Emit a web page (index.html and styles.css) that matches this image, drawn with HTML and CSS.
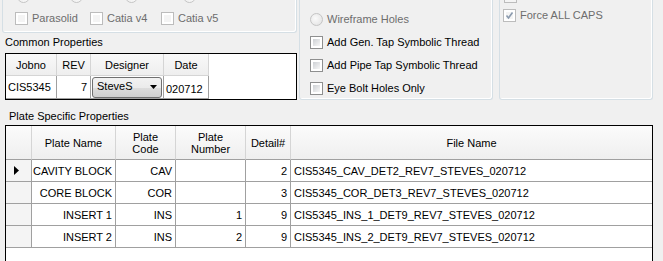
FILE: index.html
```html
<!DOCTYPE html>
<html>
<head>
<meta charset="utf-8">
<link rel="stylesheet" href="styles.css">
</head>
<body>
<div class="top">
  <div class="leftcol">
    <div class="group g-left">
      <div class="peek-row">
        <span class="peek-radio p1"></span>
        <span class="peek-radio p2"></span>
        <span class="peek-radio p3"></span>
        <span class="peek-radio p4"></span>
      </div>
      <div class="check-row">
        <label class="cb disabled"><span class="box"></span>Parasolid</label>
        <label class="cb disabled"><span class="box"></span>Catia v4</label>
        <label class="cb disabled"><span class="box"></span>Catia v5</label>
      </div>
    </div>
    <div class="caption cap1">Common Properties</div>
    <div class="grid1">
      <div class="g1-row g1-head">
        <div class="c1 w-job">Jobno</div>
        <div class="c1 w-rev">REV</div>
        <div class="c1 w-des">Designer</div>
        <div class="c1 w-date">Date</div>
      </div>
      <div class="g1-row g1-data">
        <div class="c1 w-job left">CIS5345</div>
        <div class="c1 w-rev right">7</div>
        <div class="c1 w-des combo-cell">
          <div class="combo"><span class="combo-text">SteveS</span><svg class="combo-arrow" width="7" height="4" viewBox="0 0 7 4"><polygon points="0,0 7,0 3.5,4" fill="#000"/></svg></div>
        </div>
        <div class="c1 w-date left date">020712</div>
      </div>
    </div>
  </div>
  <div class="group g-mid">
    <label class="opt disabled"><span class="radio"></span>Wireframe Holes</label>
    <label class="opt"><span class="box"></span>Add Gen. Tap Symbolic Thread</label>
    <label class="opt"><span class="box"></span>Add Pipe Tap Symbolic Thread</label>
    <label class="opt"><span class="box"></span>Eye Bolt Holes Only</label>
  </div>
  <div class="group g-right">
    <span class="peek-box"></span>
    <label class="cb disabled force"><span class="box checked"><svg width="9" height="9" viewBox="0 0 9 9"><path d="M1.5 4.5 L3.5 7 L7.5 1.5" fill="none" stroke="#8a9aae" stroke-width="1.6"/></svg></span>Force ALL CAPS</label>
  </div>
</div>
<div class="caption cap2">Plate Specific Properties</div>
<div class="grid2">
  <div class="g2-row g2-head">
    <div class="c2 rh"></div>
    <div class="c2 w-name">Plate Name</div>
    <div class="c2 w-code">Plate<br>Code</div>
    <div class="c2 w-num">Plate<br>Number</div>
    <div class="c2 w-det">Detail#</div>
    <div class="c2 w-file">File Name</div>
  </div>
  <div class="g2-row g2-data">
    <div class="c2 rh"><svg width="5" height="9" viewBox="0 0 5 9"><polygon points="0,0 5,4.5 0,9" fill="#000"/></svg></div>
    <div class="c2 w-name">CAVITY BLOCK</div>
    <div class="c2 w-code">CAV</div>
    <div class="c2 w-num"></div>
    <div class="c2 w-det">2</div>
    <div class="c2 w-file">CIS5345_CAV_DET2_REV7_STEVES_020712</div>
  </div>
  <div class="g2-row g2-data">
    <div class="c2 rh"></div>
    <div class="c2 w-name">CORE BLOCK</div>
    <div class="c2 w-code">COR</div>
    <div class="c2 w-num"></div>
    <div class="c2 w-det">3</div>
    <div class="c2 w-file">CIS5345_COR_DET3_REV7_STEVES_020712</div>
  </div>
  <div class="g2-row g2-data">
    <div class="c2 rh"></div>
    <div class="c2 w-name">INSERT 1</div>
    <div class="c2 w-code">INS</div>
    <div class="c2 w-num">1</div>
    <div class="c2 w-det">9</div>
    <div class="c2 w-file">CIS5345_INS_1_DET9_REV7_STEVES_020712</div>
  </div>
  <div class="g2-row g2-data">
    <div class="c2 rh"></div>
    <div class="c2 w-name">INSERT 2</div>
    <div class="c2 w-code">INS</div>
    <div class="c2 w-num">2</div>
    <div class="c2 w-det">9</div>
    <div class="c2 w-file">CIS5345_INS_2_DET9_REV7_STEVES_020712</div>
  </div>
</div>
</body>
</html>
```
FILE: styles.css
```css
html, body {
  margin: 0;
  padding: 0;
  background: #f0f0f0;
  overflow: hidden;
}
body {
  width: 663px;
  height: 261px;
  font-family: "Liberation Sans", Arial, sans-serif;
  font-size: 11px;
  color: #000;
}
.top {
  display: flex;
  align-items: flex-start;
}
.leftcol {
  margin-left: 2px;
  width: 295px;
  display: flex;
  flex-direction: column;
}
.group {
  box-sizing: border-box;
  border: 1px solid #d5dfe5;
  border-top: none;
  border-radius: 0 0 3px 3px;
  box-shadow: inset -1px -1px 0 #fff;
}
.g-left {
  height: 33px;
  overflow: hidden;
}
.peek-row {
  position: relative;
  height: 0;
}
.peek-radio {
  position: absolute;
  top: -10px;
  width: 11px;
  height: 11px;
  border: 1px solid #c4c4c4;
  border-radius: 50%;
  background: linear-gradient(135deg, #e6e6e6, #fafafa);
}
.p1 { left: 14px; }
.p2 { left: 67px; }
.p3 { left: 122px; }
.p4 { left: 180px; }
.check-row {
  display: grid;
  grid-template-columns: 75px 71px auto;
  padding: 12px 0 0 12px;
}
.cb, .opt {
  display: flex;
  align-items: center;
  gap: 4px;
  height: 13px;
  line-height: 13px;
  white-space: nowrap;
}
.box {
  box-sizing: border-box;
  width: 13px;
  height: 13px;
  flex: none;
  border: 1px solid #8e8f8f;
  background: #fff;
  position: relative;
  display: flex;
  align-items: center;
  justify-content: center;
}
.box::before {
  content: "";
  position: absolute;
  left: 2px; top: 2px; right: 2px; bottom: 2px;
  background: linear-gradient(135deg, #cdd0d4, #f7f7f7);
  border: 0;
}
.disabled { color: #6d6d6d; }
.disabled .box {
  border-color: #bcbcbc;
  background: #fff;
}
.disabled .box::before {
  background: #f4f4f4;
}
.box svg { position: relative; }
.box.checked::before { background: #f4f4f4; }
.radio {
  box-sizing: border-box;
  width: 13px;
  height: 13px;
  flex: none;
  border: 1px solid #c4c4c4;
  border-radius: 50%;
  background: radial-gradient(circle at 40% 40%, #fafafa, #e0e0e0);
}
.caption {
  height: 13px;
  line-height: 13px;
  white-space: nowrap;
}
.cap1 {
  margin: 3px 0 0 3px;
}
.grid1 {
  box-sizing: border-box;
  margin: 4px 0 0 3px;
  width: 292px;
  height: 47px;
  border: 1px solid #000;
  background: #fff;
}
.g1-row {
  display: flex;
}
.g1-head {
  height: 22px;
}
.g1-data {
  height: 23px;
}
.c1 {
  box-sizing: border-box;
  border-right: 1px solid #d5d5d5;
  display: flex;
  align-items: center;
  justify-content: center;
  white-space: nowrap;
}
.g1-head .c1 {
  background: linear-gradient(#f9f9f9, #eeeeee);
  border-bottom: 1px solid #d5d5d5;
}
.g1-data .c1 {
  border-right-color: #a0a0a0;
  border-bottom: 1px solid #a0a0a0;
}
.w-job { width: 51px; }
.w-rev { width: 34px; }
.w-des { width: 73px; }
.w-date { width: 45px; }
.left { justify-content: flex-start; padding-left: 2px; }
.right { justify-content: flex-end; padding-right: 3px; }
.date { padding-top: 3px; }
.combo-cell { padding: 1px 1px 1px 1px; }
.combo {
  box-sizing: border-box;
  width: 71px;
  height: 21px;
  border: 1px solid #707070;
  border-radius: 3px;
  background: linear-gradient(#f2f2f2 0%, #ebebeb 50%, #dddddd 51%, #cfcfcf 100%);
  display: flex;
  align-items: center;
  justify-content: space-between;
  padding: 0 4px 0 4px;
}
.combo-text { margin-top: -3px; }
.g-mid {
  margin-left: 2px;
  width: 194px;
  height: 100px;
  padding: 13px 0 0 10px;
  display: flex;
  flex-direction: column;
  gap: 10px;
}
.g-right {
  margin-left: 6px;
  width: 154px;
  height: 100px;
  padding: 0 0 0 3px;
  position: relative;
}
.peek-box {
  position: absolute;
  left: 4px;
  top: -10px;
  width: 11px;
  height: 11px;
  border: 1px solid #bcbcbc;
  background: #f4f4f4;
}
.force {
  margin-top: 9px;
}
.cap2 {
  margin: 10px 0 0 9px;
}
.grid2 {
  box-sizing: border-box;
  margin: 2px 0 0 5px;
  width: 648px;
  height: 140px;
  border: 1px solid #000;
  border-bottom: none;
  background: #fff;
}
.g2-row {
  display: flex;
}
.g2-head {
  height: 34px;
}
.g2-data {
  height: 22px;
}
.c2 {
  box-sizing: border-box;
  border-right: 1px solid #a0a0a0;
  border-bottom: 1px solid #a0a0a0;
  display: flex;
  align-items: center;
  justify-content: flex-end;
  padding-right: 3px;
  white-space: nowrap;
}
.g2-head .c2 {
  background: linear-gradient(#fbfbfb, #efefef);
  border-right-color: #d5d5d5;
  border-bottom-color: #a0a0a0;
  justify-content: center;
  text-align: center;
  line-height: 12px;
  padding: 0;
}
.g2-data .rh {
  background: #f4f4f4;
  justify-content: center;
  padding: 0 4px 0 0;
}
.rh { width: 26px; }
.w-name { width: 84px; }
.w-code { width: 60px; }
.w-num { width: 70px; }
.w-det { width: 45px; }
.w-file { width: 361px; border-right: none; }
.g2-data .w-file { justify-content: flex-start; padding-left: 3px; }
```
